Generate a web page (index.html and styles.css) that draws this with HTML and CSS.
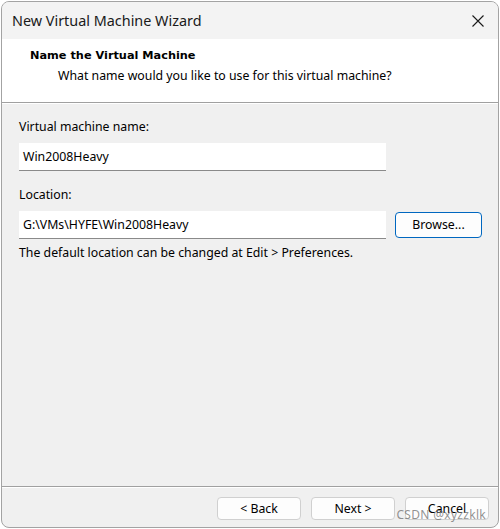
FILE: index.html
```html
<!DOCTYPE html>
<html>
<head>
<meta charset="utf-8">
<link rel="stylesheet" href="styles.css">
</head>
<body>
<div class="window">
  <div class="titlebar">
    <span class="title">New Virtual Machine Wizard</span>
    <svg class="close" width="12" height="12" viewBox="0 0 12 12"><path d="M0.5 0.5 L11.5 11.5 M11.5 0.5 L0.5 11.5" stroke="#1a1a1a" stroke-width="1.1" fill="none"/></svg>
  </div>
  <div class="header">
    <div class="h-title">Name the Virtual Machine</div>
    <div class="h-sub">What name would you like to use for this virtual machine?</div>
  </div>
  <div class="content">
    <div class="label">Virtual machine name:</div>
    <div class="row">
      <div class="input">Win2008Heavy</div>
    </div>
    <div class="label label2">Location:</div>
    <div class="row">
      <div class="input">G:\VMs\HYFE\Win2008Heavy</div>
      <div class="btn browse">Browse...</div>
    </div>
    <div class="help">The default location can be changed at Edit &gt; Preferences.</div>
  </div>
  <div class="footer">
    <div class="btn">&lt; Back</div>
    <div class="btn">Next &gt;</div>
    <div class="btn">Cancel</div>
    <span class="watermark">CSDN @xyzzklk</span>
  </div>
</div>
</body>
</html>
```
FILE: styles.css
```css
html, body {
  margin: 0;
  padding: 0;
  background: #ffffff;
}
body {
  font-family: "Noto Sans", "Open Sans", sans-serif;
  font-size: 12.3px;
  color: #000;
}
.window {
  box-sizing: border-box;
  width: 498px;
  height: 527px;
  margin: 1px 0 0 1px;
  border: 1px solid #a3a3a3;
  border-radius: 8px;
  background: #f0f0f0;
  overflow: hidden;
  display: flex;
  flex-direction: column;
  position: relative;
}
.titlebar {
  height: 37px;
  background: #f3f3f3;
  display: flex;
  align-items: center;
  justify-content: space-between;
  padding: 0 14px 0 10px;
  flex: none;
}
.title {
  font-family: "Noto Sans", sans-serif;
  font-size: 14.4px;
  color: #1a1a1a;
}
.close {
  display: block;
}
.header {
  background: #fff;
  height: 64px;
  border-bottom: 1px solid #a0a0a0;
  padding: 10px 0 0 28px;
  box-sizing: border-box;
  flex: none;
}
.h-title {
  font-family: "DejaVu Sans", sans-serif;
  font-weight: bold;
  font-size: 11.3px;
  line-height: 14px;
}
.h-sub {
  margin-left: 28px;
  margin-top: 6px;
  line-height: 14px;
}
.content {
  flex: 1;
  padding: 16px 0 0 17px;
  box-shadow: inset 0 1px 0 #fff;
}
.label {
  line-height: 16px;
  height: 16px;
}
.label2 {
  margin-top: 16px;
}
.row {
  display: flex;
  align-items: center;
  gap: 9px;
  margin-top: 8px;
}
.input {
  box-sizing: border-box;
  width: 367px;
  height: 28px;
  background: #fff;
  border-bottom: 1px solid #8a8a8a;
  padding: 0 0 0 4px;
  line-height: 27px;
}
.btn {
  box-sizing: border-box;
  width: 84px;
  height: 23px;
  background: #fdfdfd;
  border: 1px solid #d0d0d0;
  border-radius: 4px;
  text-align: center;
  line-height: 21px;
}
.btn.browse {
  width: 87px;
  height: 26px;
  line-height: 24px;
  border-color: #0067c0;
}
.help {
  margin-top: 6px;
  line-height: 16px;
}
.footer {
  flex: none;
  height: 41px;
  border-top: 1px solid #a0a0a0;
  box-shadow: inset 0 1px 0 #fff;
  box-sizing: border-box;
  display: flex;
  justify-content: flex-end;
  align-items: flex-start;
  gap: 10px;
  padding: 10px 9px 0 0;
  position: relative;
}
.watermark {
  position: absolute;
  right: 12px;
  top: 19px;
  font-family: "Noto Sans", sans-serif;
  font-size: 12px;
  color: rgba(110, 110, 110, 0.75);
  letter-spacing: 0.3px;
}
```
